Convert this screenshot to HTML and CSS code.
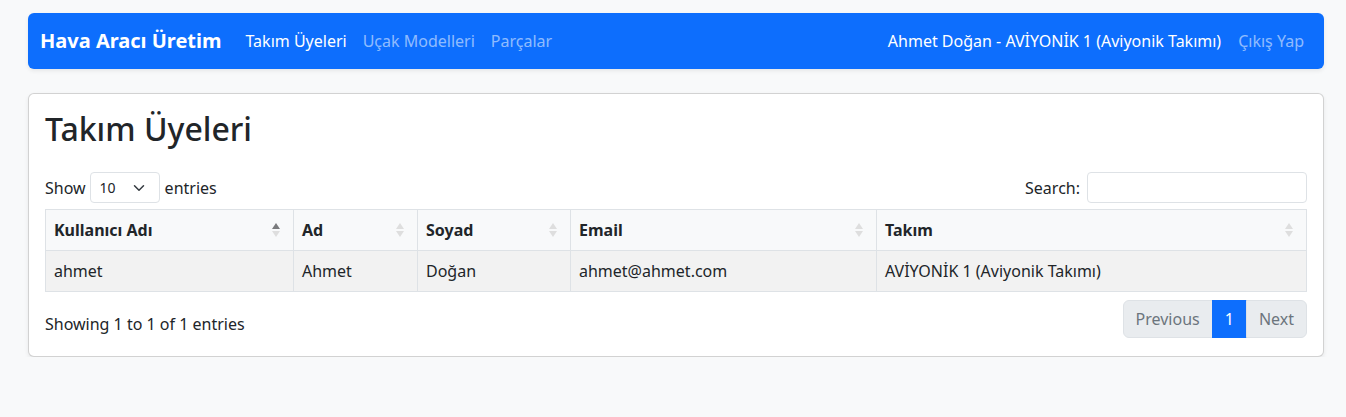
FILE: index.html
```html
<!DOCTYPE html>
<html lang="tr">
<head>
<meta charset="utf-8">
<title>Takım Üyeleri</title>
<link rel="stylesheet" href="styles.css">
</head>
<body>
<div class="wrap">
  <nav class="navbar">
    <div class="nav-left">
      <a class="brand" href="#">Hava Aracı Üretim</a>
      <a class="nav-link active" href="#">Takım Üyeleri</a>
      <a class="nav-link" href="#">Uçak Modelleri</a>
      <a class="nav-link" href="#">Parçalar</a>
    </div>
    <div class="nav-right">
      <span class="nav-text">Ahmet Doğan - AVİYONİK 1 (Aviyonik Takımı)</span>
      <a class="nav-link" href="#">Çıkış Yap</a>
    </div>
  </nav>

  <div class="card">
    <h2 class="title">Takım Üyeleri</h2>
    <div class="dt-top">
      <label class="length">Show
        <span class="select"><span>10</span>
          <svg width="12" height="12" viewBox="0 0 16 16"><path d="M2 5l6 6 6-6" fill="none" stroke="#343a40" stroke-width="2" stroke-linecap="round" stroke-linejoin="round"/></svg>
        </span>
        entries</label>
      <label class="search">Search: <input type="search" class="search-input"></label>
    </div>
    <table class="table">
      <thead>
        <tr>
          <th class="c1"><div class="th"><span>Kullanıcı Adı</span><span class="sort asc"><i class="up"></i><i class="down"></i></span></div></th>
          <th class="c2"><div class="th"><span>Ad</span><span class="sort"><i class="up"></i><i class="down"></i></span></div></th>
          <th class="c3"><div class="th"><span>Soyad</span><span class="sort"><i class="up"></i><i class="down"></i></span></div></th>
          <th class="c4"><div class="th"><span>Email</span><span class="sort"><i class="up"></i><i class="down"></i></span></div></th>
          <th class="c5"><div class="th"><span>Takım</span><span class="sort"><i class="up"></i><i class="down"></i></span></div></th>
        </tr>
      </thead>
      <tbody>
        <tr>
          <td>ahmet</td>
          <td>Ahmet</td>
          <td>Doğan</td>
          <td>ahmet@ahmet.com</td>
          <td>AVİYONİK 1 (Aviyonik Takımı)</td>
        </tr>
      </tbody>
    </table>
    <div class="dt-bottom">
      <div class="info">Showing 1 to 1 of 1 entries</div>
      <ul class="pagination">
        <li class="pg disabled first">Previous</li>
        <li class="pg active">1</li>
        <li class="pg disabled last">Next</li>
      </ul>
    </div>
  </div>
</div>
</body>
</html>
```

FILE: styles.css
```css
* { box-sizing: border-box; }
html, body { margin: 0; padding: 0; }
body {
  background: #f8f9fa;
  font-family: "Noto Sans", "Liberation Sans", sans-serif;
  font-size: 16px;
  line-height: 24px;
  color: #212529;
}
.wrap {
  width: 1296px;
  margin-left: 28px;
  padding-top: 13px;
}
.navbar {
  height: 56px;
  background: #0d6efd;
  border-radius: 6px;
  box-shadow: 0 2px 4px rgba(0,0,0,.075);
  display: flex;
  align-items: center;
  justify-content: space-between;
  padding: 8px 12px;
}
.nav-left, .nav-right { display: flex; align-items: center; }
.brand {
  color: #fff;
  font-weight: 700;
  font-size: 20px;
  line-height: 30px;
  text-decoration: none;
  margin-right: 16px;
}
.nav-link {
  color: rgba(255,255,255,.55);
  text-decoration: none;
  padding: 8px;
}
.nav-link.active { color: #fff; }
.nav-text { color: #fff; margin-right: 9px; }

.card {
  margin-top: 24px;
  background: #fff;
  border: 1px solid rgba(0,0,0,.175);
  border-radius: 6px;
  box-shadow: 0 2px 4px rgba(0,0,0,.075);
  padding: 16px 16px 18px;
}
.title {
  margin: 0 0 24px;
  font-size: 32px;
  line-height: 38px;
  font-weight: 500;
}
.dt-top {
  display: flex;
  justify-content: space-between;
  align-items: center;
  height: 31px;
}
.length { display: flex; align-items: center; }
.select {
  display: inline-flex;
  align-items: center;
  justify-content: space-between;
  width: 70px;
  height: 31px;
  margin: 0 5px 0 4px;
  padding: 0 8px 0 9px;
  border: 1px solid #dee2e6;
  border-radius: 4px;
  font-size: 14px;
}
.select svg { margin-right: 6px; }
.search { display: flex; align-items: center; }
.search-input {
  width: 220px;
  height: 31px;
  margin-left: 7px;
  border: 1px solid #dee2e6;
  border-radius: 4px;
  font: inherit;
  font-size: 14px;
}
.table {
  width: 100%;
  margin-top: 6px;
  border-collapse: collapse;
  table-layout: fixed;
}
.table th, .table td {
  border: 1px solid #dee2e6;
  padding: 8px;
  text-align: left;
  height: 41px;
}
.table th { background: #f8f9fa; font-weight: 700; padding-right: 13px; }
.table td { background: #f2f2f2; }
.c1 { width: 248px; }
.c2 { width: 124px; }
.c3 { width: 153px; }
.c4 { width: 306px; }
.th { display: flex; justify-content: space-between; align-items: center; }
.sort { display: flex; flex-direction: column; gap: 2px; }
.sort i {
  display: block;
  width: 0; height: 0;
  border-left: 4px solid transparent;
  border-right: 4px solid transparent;
}
.sort .up { border-bottom: 6px solid #dedede; }
.sort .down { border-top: 6px solid #dedede; }
.sort.asc .up { border-bottom-color: #7a7b7d; }
.dt-bottom {
  display: flex;
  justify-content: space-between;
  align-items: flex-start;
  margin-top: 7px;
}
.info { padding-top: 13px; }
.pagination {
  display: flex;
  list-style: none;
  margin: 1px 0 0;
  padding: 0;
}
.pg {
  padding: 6px 12px;
  border: 1px solid #dee2e6;
  margin-left: -1px;
}
.pg.disabled { background: #e9ecef; color: #6c757d; }
.pg.active { background: #0d6efd; border-color: #0d6efd; color: #fff; }
.pg.first { border-radius: 6px 0 0 6px; margin-left: 0; }
.pg.last { border-radius: 0 6px 6px 0; }
```
